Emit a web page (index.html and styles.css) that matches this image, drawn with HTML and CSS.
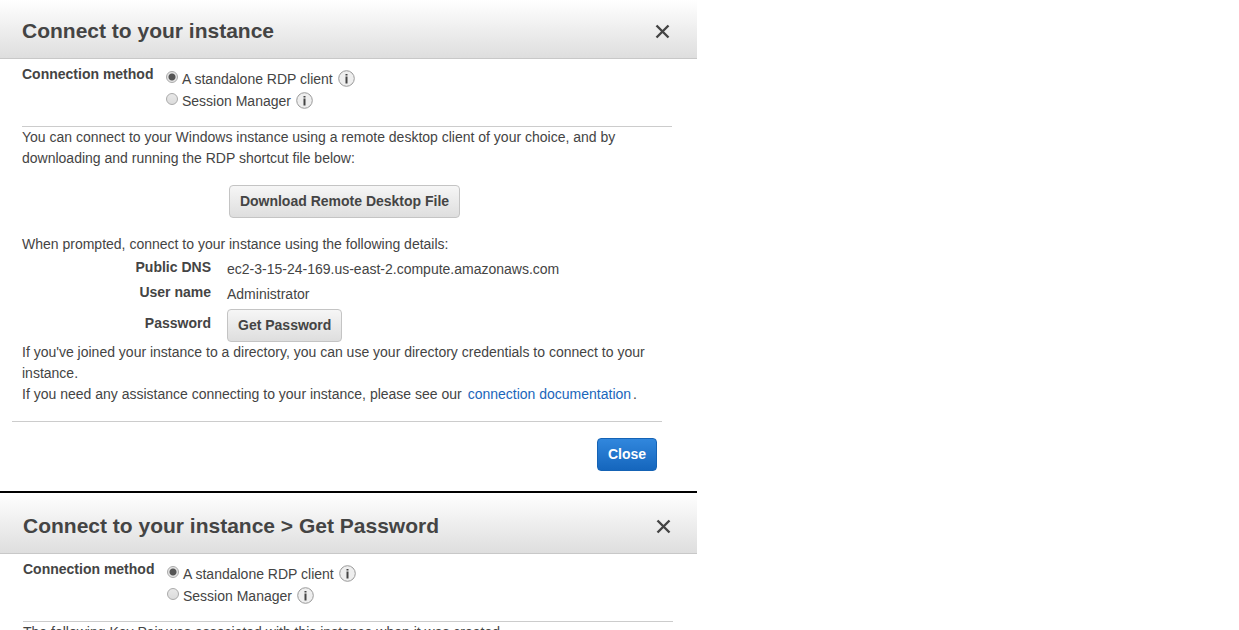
FILE: index.html
```html
<!DOCTYPE html>
<html lang="en">
<head>
<meta charset="utf-8">
<title>Connect to your instance</title>
<link rel="stylesheet" href="styles.css">
</head>
<body>
<main class="dialogs">
  <section class="dialog" aria-labelledby="title-connect">
    <header class="dialog-header">
      <h1 class="dialog-title" id="title-connect">Connect to your instance</h1>
      <button class="dismiss" type="button" aria-label="Dismiss">
        <svg class="dismiss-icon" viewBox="0 0 15 15" aria-hidden="true"><path d="M1.5 2.5 L13.5 14.5 M13.5 2.5 L1.5 14.5"/></svg>
      </button>
    </header>
    <div class="dialog-body">
      <div class="method" role="radiogroup" aria-labelledby="method-a-label">
        <span class="method-label" id="method-a-label">Connection method</span>
        <div class="options">
          <div class="option">
            <input class="radio" type="radio" name="method-a" id="rdp-a" checked>
            <label for="rdp-a">A standalone RDP client</label>
            <svg class="info" viewBox="0 0 17 17" aria-hidden="true"><circle cx="8.5" cy="8.5" r="7.8"/><path d="M7.5 4h2v1.6h-2z M7.5 6.5h2v7h-2z"/></svg>
          </div>
          <div class="option">
            <input class="radio" type="radio" name="method-a" id="session-a">
            <label for="session-a">Session Manager</label>
            <svg class="info" viewBox="0 0 17 17" aria-hidden="true"><circle cx="8.5" cy="8.5" r="7.8"/><path d="M7.5 4h2v1.6h-2z M7.5 6.5h2v7h-2z"/></svg>
          </div>
        </div>
      </div>
      <p class="text">You can connect to your Windows instance using a remote desktop client of your choice, and by downloading and running the RDP shortcut file below:</p>
      <div class="download">
        <button class="button" type="button">Download Remote Desktop File</button>
      </div>
      <p class="text">When prompted, connect to your instance using the following details:</p>
      <dl class="details">
        <dt>Public DNS</dt>
        <dd>ec2-3-15-24-169.us-east-2.compute.amazonaws.com</dd>
        <dt>User name</dt>
        <dd>Administrator</dd>
        <dt class="password-label">Password</dt>
        <dd class="password-value"><button class="button" type="button">Get Password</button></dd>
      </dl>
      <p class="text">If you've joined your instance to a directory, you can use your directory credentials to connect to your instance.</p>
      <p class="text">If you need any assistance connecting to your instance, please see our <a class="link" href="#">connection documentation</a>.</p>
    </div>
    <footer class="dialog-footer">
      <button class="button button-primary" type="button">Close</button>
    </footer>
  </section>

  <section class="dialog dialog-next" aria-labelledby="title-password">
    <header class="dialog-header">
      <h1 class="dialog-title" id="title-password">Connect to your instance &gt; Get Password</h1>
      <button class="dismiss" type="button" aria-label="Dismiss">
        <svg class="dismiss-icon" viewBox="0 0 15 15" aria-hidden="true"><path d="M1.5 2.5 L13.5 14.5 M13.5 2.5 L1.5 14.5"/></svg>
      </button>
    </header>
    <div class="dialog-body">
      <div class="method" role="radiogroup" aria-labelledby="method-b-label">
        <span class="method-label" id="method-b-label">Connection method</span>
        <div class="options">
          <div class="option">
            <input class="radio" type="radio" name="method-b" id="rdp-b" checked>
            <label for="rdp-b">A standalone RDP client</label>
            <svg class="info" viewBox="0 0 17 17" aria-hidden="true"><circle cx="8.5" cy="8.5" r="7.8"/><path d="M7.5 4h2v1.6h-2z M7.5 6.5h2v7h-2z"/></svg>
          </div>
          <div class="option">
            <input class="radio" type="radio" name="method-b" id="session-b">
            <label for="session-b">Session Manager</label>
            <svg class="info" viewBox="0 0 17 17" aria-hidden="true"><circle cx="8.5" cy="8.5" r="7.8"/><path d="M7.5 4h2v1.6h-2z M7.5 6.5h2v7h-2z"/></svg>
          </div>
        </div>
      </div>
      <p class="text">The following Key Pair was associated with this instance when it was created.</p>
    </div>
  </section>
</main>
</body>
</html>
```

FILE: styles.css
```css
* { box-sizing: border-box; }

body {
  margin: 0;
  height: 100vh;
  overflow: hidden;
  background: #fff;
  color: #444;
  font: 14px/21px "Liberation Sans", Arial, sans-serif;
}

.dialogs { max-width: 697px; }

.dialog-header {
  display: flex;
  align-items: center;
  justify-content: space-between;
  padding: 17px 27px 14px 22px;
  border-bottom: 1px solid #c8c8c8;
  background: linear-gradient(#fff, #dedede);
}

.dialog-title {
  margin: 0;
  font-size: 21px;
  line-height: 27px;
  font-weight: bold;
}

.dismiss {
  display: flex;
  padding: 0;
  border: 0;
  background: none;
}

.dismiss-icon {
  width: 15px;
  height: 15px;
  overflow: visible;
  fill: none;
  stroke: #444;
  stroke-width: 2.4;
}

.dialog-body { padding: 0 25px 16px 22px; }

.method {
  display: flex;
  padding: 5px 0 14px;
  border-bottom: 1px solid #ccc;
}

.method-label {
  width: 144px;
  font-weight: bold;
}

.options { padding-top: 4px; }

.option {
  display: flex;
  align-items: center;
  height: 22px;
}

.radio {
  appearance: none;
  align-self: flex-start;
  width: 12px;
  height: 12px;
  margin: 3px 4px 0 0;
  border: 1px solid #aaa;
  border-radius: 50%;
  background: linear-gradient(#e8e8e8, #dcdcdc);
}

.radio:checked {
  background: radial-gradient(circle, #555 0 3px, #e4e4e4 4px);
}

.info {
  width: 17px;
  height: 17px;
  margin: 0 0 2px 5px;
}

.info circle { fill: #eee; stroke: #999; }
.info path { fill: #444; }

.text { margin: 0; }

.download {
  display: flex;
  justify-content: center;
  padding: 16px 5px 16px 0;
}

.button {
  height: 33px;
  padding: 0 10px;
  border: 1px solid #c4c4c4;
  border-radius: 4px;
  background: linear-gradient(#f6f6f6, #dedede);
  color: #444;
  font: bold 14px/21px "Liberation Sans", Arial, sans-serif;
}

.button-primary {
  border-color: #1563b5;
  background: linear-gradient(#3187dd, #1566bd);
  color: #fff;
}

.details {
  display: grid;
  grid-template-columns: 189px 1fr;
  column-gap: 16px;
  margin: 0;
}

.details dt {
  padding: 2px 0;
  font-weight: bold;
  text-align: right;
}

.details dd {
  margin: 0;
  padding-top: 4px;
}

.details .password-label { padding-top: 8px; }
.details .password-value { padding: 4px 0 0; }
.password-value .button { display: block; }

.link {
  margin: 0 2px;
  color: #1a66bb;
  text-decoration: none;
}

.dialog-footer {
  display: flex;
  justify-content: flex-end;
  margin: 0 35px 0 12px;
  padding: 16px 5px 20px;
  border-top: 1px solid #ccc;
}

.dialog-next { border-top: 2px solid #000; }
.dialog-next .dialog-header { padding: 19px 26px 14px 23px; }
.dialog-next .dialog-body { padding: 0 24px 16px 23px; }
```
